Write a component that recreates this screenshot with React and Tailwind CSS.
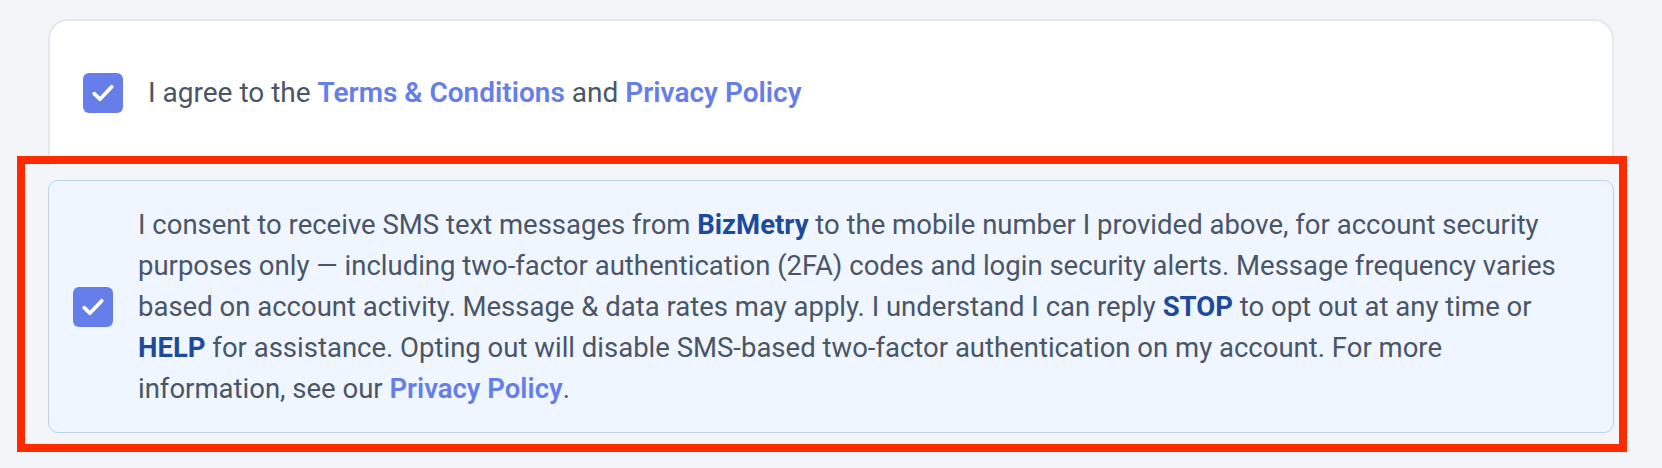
import React from "react";

function Checkbox() {
  return (
    <span className="flex h-[40px] w-[40px] shrink-0 items-center justify-center rounded-[6px] bg-[#667eea]">
      <svg viewBox="0 0 24 24" className="h-[30px] w-[30px]" fill="none" stroke="#fff" strokeWidth="3" strokeLinecap="round" strokeLinejoin="round">
        <polyline points="5 12.5 9.5 17 19 7" />
      </svg>
    </span>
  );
}

export default function App() {
  return (
    <div className="min-h-screen bg-[#f4f5f9] px-[48px] pt-[19px] font-['Roboto',sans-serif] text-[#4a5568]">
      {/* terms card */}
      <div className="flex h-[146px] items-start gap-[25px] rounded-t-[20px] border-2 border-b-0 border-[#e3e7f0] bg-white pl-[33px] pt-[52px]">
        <Checkbox />
        <p className="text-[28px] leading-[40px]">
          I agree to the{" "}
          <a href="#" className="font-semibold text-[#667eea]">Terms &amp; Conditions</a>{" "}
          and{" "}
          <a href="#" className="font-semibold text-[#667eea]">Privacy Policy</a>
        </p>
      </div>

      {/* sms consent */}
      <div className="relative mt-[15px] flex items-center gap-[25px] rounded-[10px] border border-[#bcd3ea] bg-[#eff6ff] py-[23px] pl-[24px] pr-[20px]">
        <Checkbox />
        <p className="text-[27.5px] leading-[41px]">
          I consent to receive SMS text messages from{" "}
          <strong className="font-bold text-[#1e4a9c]">BizMetry</strong> to the mobile number I
          provided above, for account security purposes only — including two-factor authentication
          (2FA) codes and login security alerts. Message frequency varies based on account activity.
          Message &amp; data rates may apply. I understand I can reply{" "}
          <strong className="font-bold text-[#1e4a9c]">STOP</strong> to opt out at any time or{" "}
          <strong className="font-bold text-[#1e4a9c]">HELP</strong> for assistance. Opting out will
          disable SMS-based two-factor authentication on my account. For more information, see our{" "}
          <a href="#" className="font-semibold text-[#667eea]">Privacy Policy</a>.
        </p>
        {/* annotation */}
        <div className="pointer-events-none absolute -bottom-[20px] -left-[32px] -right-[14px] -top-[25px] border-[8px] border-[#ff2a00]" />
      </div>
    </div>
  );
}
